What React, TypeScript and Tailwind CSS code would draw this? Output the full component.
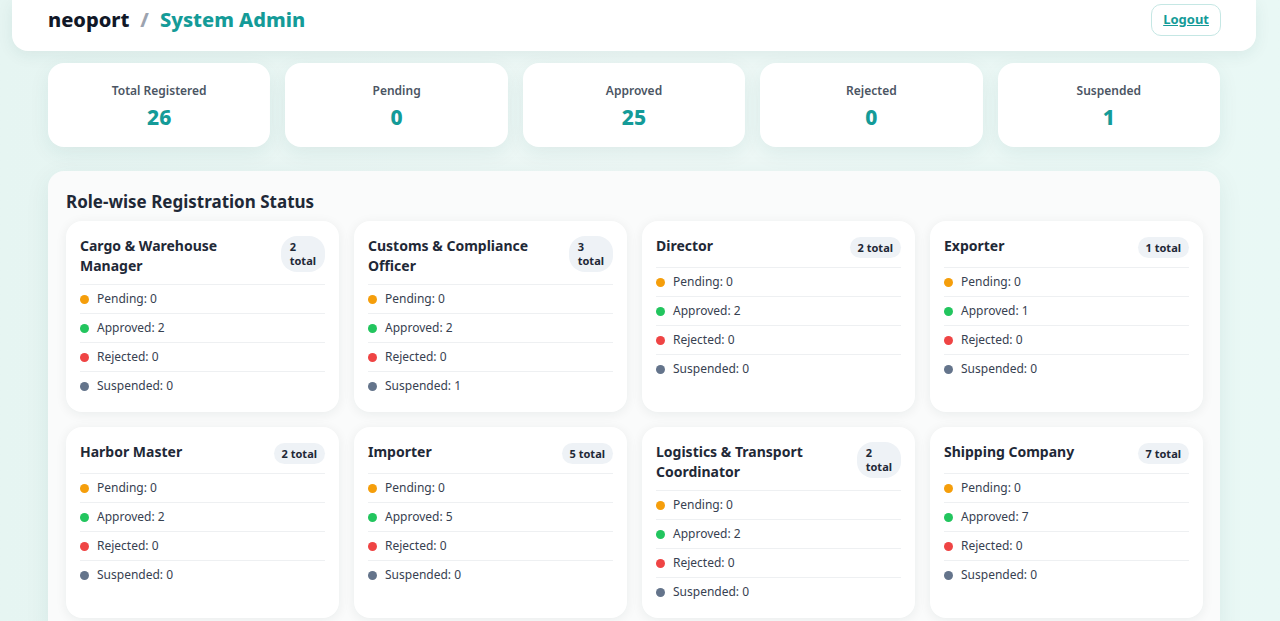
import React from 'react'

const STATS = [
  { label: 'Total Registered', value: 26 },
  { label: 'Pending', value: 0 },
  { label: 'Approved', value: 25 },
  { label: 'Rejected', value: 0 },
  { label: 'Suspended', value: 1 },
]

const ROLES = [
  { name: 'Cargo & Warehouse Manager', total: 2, wrap: true, counts: [0, 2, 0, 0] },
  { name: 'Customs & Compliance Officer', total: 3, wrap: true, counts: [0, 2, 0, 1] },
  { name: 'Director', total: 2, wrap: false, counts: [0, 2, 0, 0] },
  { name: 'Exporter', total: 1, wrap: false, counts: [0, 1, 0, 0] },
  { name: 'Harbor Master', total: 2, wrap: false, counts: [0, 2, 0, 0] },
  { name: 'Importer', total: 5, wrap: false, counts: [0, 5, 0, 0] },
  { name: 'Logistics & Transport Coordinator', total: 2, wrap: true, counts: [0, 2, 0, 0] },
  { name: 'Shipping Company', total: 7, wrap: false, counts: [0, 7, 0, 0] },
]

const STATUSES = [
  { label: 'Pending', dot: 'bg-[#f59e0b]' },
  { label: 'Approved', dot: 'bg-[#22c55e]' },
  { label: 'Rejected', dot: 'bg-[#ef4444]' },
  { label: 'Suspended', dot: 'bg-[#64748b]' },
]

function RoleCard({ role }: { role: (typeof ROLES)[number] }) {
  return (
    <div className="bg-white rounded-2xl px-3.5 pt-[15px] pb-3 shadow-[0_2px_12px_rgba(15,40,40,0.07)]">
      <div className="flex items-start justify-between gap-3 pb-2 border-b border-[#eef0f2]">
        <h3 className="text-[14px] leading-5 font-bold text-[#1f2937]">{role.name}</h3>
        {role.wrap ? (
          <span className="shrink-0 rounded-2xl bg-[#eef2f6] px-[9px] py-1 text-[11px] leading-[14px] font-bold text-[#1f2937]">
            {role.total}
            <br />
            total
          </span>
        ) : (
          <span className="shrink-0 mt-px mb-px rounded-full bg-[#eef2f6] px-2 py-[3px] text-[11px] leading-[15px] font-bold text-[#1f2937] whitespace-nowrap">
            {role.total} total
          </span>
        )}
      </div>
      <ul>
        {STATUSES.map((s, i) => (
          <li
            key={s.label}
            className="flex items-center gap-2 py-1.5 text-[12px] leading-4 text-[#374151] border-b border-[#eef0f2] last:border-b-0"
          >
            <span className={`w-[9px] h-[9px] rounded-full ${s.dot}`} />
            {s.label}: {role.counts[i]}
          </li>
        ))}
      </ul>
    </div>
  )
}

export default function App() {
  return (
    <div
      className="min-h-screen bg-gradient-to-r from-[#e6f5f2] via-[#eef8f6] to-[#e9f8f5] pb-10"
      style={{ fontFamily: '"Noto Sans", "Open Sans", sans-serif' }}
    >
      {/* Header */}
      <header className="ml-3 mr-6 h-[51px] bg-white rounded-b-2xl shadow-[0_4px_16px_rgba(20,80,80,0.08)] flex items-center justify-between pl-9 pr-[35px] pb-[11px]">
        <div className="flex items-center gap-[11px] text-[20px] font-extrabold">
          <span className="text-[#111827]">neoport</span>
          <span className="text-[#9ca3af]">/</span>
          <span className="text-[#149b98]">System Admin</span>
        </div>
        <button className="h-8 px-[11px] rounded-[10px] border border-[#c5e7e4] text-[13px] font-bold text-[#149b98] underline">
          Logout
        </button>
      </header>

      <main className="ml-12 mr-[60px] mt-3 space-y-6">
        {/* Stats */}
        <div className="grid grid-cols-5 gap-[15px]">
          {STATS.map(s => (
            <div
              key={s.label}
              className="h-[84px] pt-0.5 bg-white rounded-2xl shadow-[0_6px_20px_rgba(20,90,90,0.08)] flex flex-col items-center justify-center"
            >
              <p className="text-[12px] font-semibold text-[#4b5563] leading-4">{s.label}</p>
              <p className="mt-1.5 text-[21px] font-extrabold text-[#149b98] leading-6">{s.value}</p>
            </div>
          ))}
        </div>

        {/* Role-wise */}
        <section className="bg-[#fafbfb] rounded-2xl shadow-[0_6px_24px_rgba(20,80,80,0.08)] pl-[18px] pr-[17px] pt-[19px] pb-6">
          <h2 className="text-[17px] font-bold text-[#1f2937] leading-6 mb-[7px]">Role-wise Registration Status</h2>
          <div className="grid grid-cols-4 gap-[15px]">
            {ROLES.map(r => (
              <RoleCard key={r.name} role={r} />
            ))}
          </div>
        </section>
      </main>
    </div>
  )
}
